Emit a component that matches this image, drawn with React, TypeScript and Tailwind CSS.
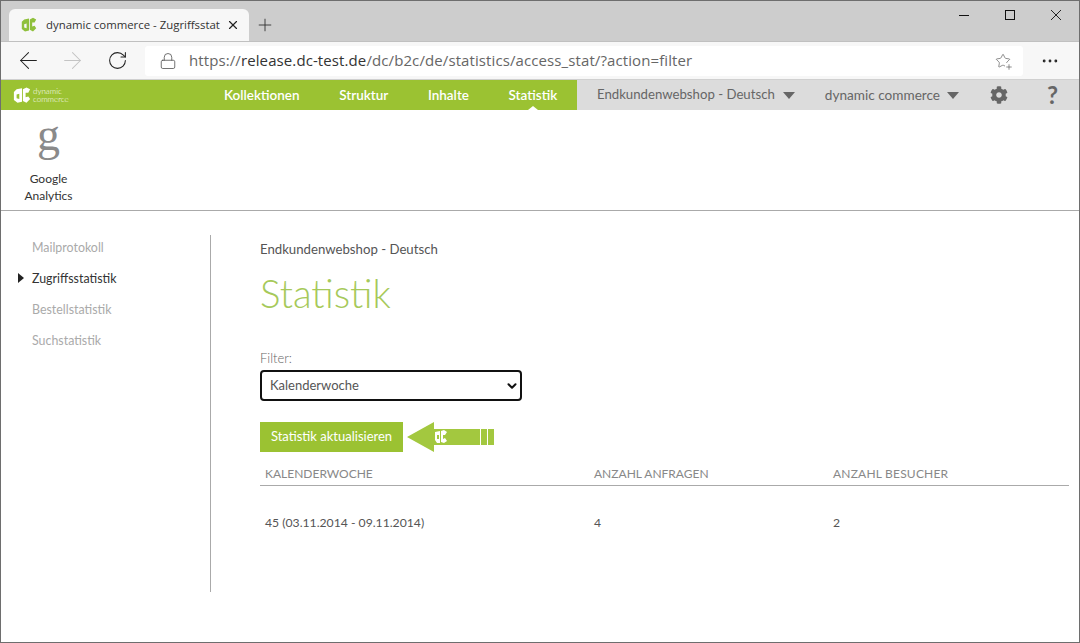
import { ArrowLeft, ArrowRight, ChevronDown, Lock, MoreHorizontal, Plus, RotateCw, Star, X } from 'lucide-react'
import { FaCog } from 'react-icons/fa'

const NAV_ITEMS = ['Kollektionen', 'Struktur', 'Inhalte', 'Statistik']
const SIDE_ITEMS = ['Mailprotokoll', 'Zugriffsstatistik', 'Bestellstatistik', 'Suchstatistik']

function DcMark({ className }: { className: string }) {
  return (
    <svg viewBox="0 0 20 18" className={className} fill="currentColor" fillRule="evenodd">
      <path d="M1 5 L4 2 L10 1 L10 16 L5 17 L1 14 Z M4 8 L4 12 L7 13 L7 7 Z" />
      <path d="M11 2 L15 0 L19 2 L17 6 L14 6 L14 11 L17 10 L19 13 L15 17 L11 15 Z" />
    </svg>
  )
}

function Caret() {
  return <span className="h-0 w-0 border-x-[6px] border-t-[7px] border-x-transparent border-t-[#666]" />
}

function BrowserChrome() {
  return (
    <>
      <div className="flex h-10 bg-[#cdcdcd] font-['Open_Sans',sans-serif]">
        <div className="mt-2 ml-2 flex h-8 w-60 items-center rounded-t-md bg-[#f7f7f7] pr-[9px] pl-3">
          <DcMark className="h-4 w-[16px] shrink-0 text-[#8fc03c]" />
          <span className="ml-[9px] text-[11.4px] whitespace-nowrap text-[#333]">dynamic commerce - Zugriffsstat</span>
          <X className="ml-auto h-3.5 w-3.5 shrink-0 text-[#222]" />
        </div>
        <Plus className="mt-[14px] ml-[6px] h-5 w-5 text-[#333]" strokeWidth={1.1} />
        <div className="ml-auto flex gap-[36px] pt-[9px] pr-[18px] text-[#111]">
          <svg viewBox="0 0 10 10" className="h-2.5 w-2.5" fill="none" stroke="currentColor">
            <path d="M0 5.5 H10" />
          </svg>
          <svg viewBox="0 0 10 10" className="h-2.5 w-2.5" fill="none" stroke="currentColor">
            <rect x="0.5" y="0.5" width="9" height="9" />
          </svg>
          <svg viewBox="0 0 10 10" className="h-2.5 w-2.5" fill="none" stroke="currentColor" strokeWidth={0.9}>
            <path d="M0 0 L10 10 M10 0 L0 10" />
          </svg>
        </div>
      </div>
      <div className="flex h-[39px] items-center border-t border-b border-t-[#c0c0c0] border-b-[#d0d0d0] bg-[#f7f7f7] font-['Open_Sans',sans-serif]">
        <ArrowLeft className="ml-[14px] h-[27px] w-[27px] text-[#222]" strokeWidth={0.9} />
        <ArrowRight className="ml-[17px] h-[27px] w-[27px] text-[#c4c4c4]" strokeWidth={0.9} />
        <RotateCw className="ml-[21px] h-[21px] w-[21px] text-[#222]" strokeWidth={1.2} />
        <div className="ml-[17px] flex h-[30px] w-[878px] items-center rounded-[3px] bg-white pl-[14px]">
          <Lock className="h-[18px] w-[18px] text-[#555]" strokeWidth={1.1} />
          <div className="ml-[12px] text-[15px] tracking-[0.1px] whitespace-nowrap text-[#666]">
            https://<span className="text-[#333]">release.dc-test.de</span>/dc/b2c/de/statistics/access_stat/?action=filter
          </div>
          <div className="relative mr-[12px] ml-auto">
            <Star className="h-4 w-4 text-[#666]" strokeWidth={1.1} />
            <Plus className="absolute -right-0.5 -bottom-0.5 h-2 w-2 bg-white text-[#555]" />
          </div>
        </div>
        <MoreHorizontal className="ml-[17px] h-5 w-5 text-[#222]" strokeWidth={1.4} />
      </div>
    </>
  )
}

function TopNav() {
  return (
    <div className="flex h-[30px] text-[13.2px]">
      <div className="flex w-[576px] items-center bg-[#9bc232]">
        <div className="ml-[12px] flex w-[60px] items-center text-white">
          <DcMark className="h-[17px] w-[18px] shrink-0" />
          <div className="ml-[2px] text-[8px] leading-[8px] font-light whitespace-nowrap">
            dynamic
            <br />
            commerce
          </div>
        </div>
        <div className="ml-[151px] flex h-full items-center gap-[39.6px] text-[13.5px] font-semibold text-white">
          {NAV_ITEMS.map((item) => (
            <div key={item} className="relative flex h-full items-center">
              {item}
              {item === 'Statistik' && (
                <span className="absolute bottom-0 left-1/2 h-0 w-0 -translate-x-1/2 border-x-[5px] border-b-[4px] border-x-transparent border-b-white" />
              )}
            </div>
          ))}
        </div>
      </div>
      <div className="flex flex-1 items-center bg-[#dcdcdc] text-[#666]">
        <span className="ml-[20px] whitespace-nowrap">Endkundenwebshop - Deutsch</span>
        <span className="ml-[8px] flex"><Caret /></span>
        <span className="ml-[30px] text-[13.6px] whitespace-nowrap">dynamic commerce</span>
        <span className="ml-[7px] flex"><Caret /></span>
        <FaCog className="ml-[31px] h-[18px] w-[18px] text-[#666]" />
        <span className="ml-[39px] text-[24px] leading-none font-bold">?</span>
      </div>
    </div>
  )
}

export default function App() {
  return (
    <div className="h-[643px] w-[1080px] overflow-hidden border border-[#6e6e6e] bg-white font-['Lato',sans-serif]">
      <BrowserChrome />
      <TopNav />
      <div className="flex h-[101px] border-b border-[#aaa]">
        <div className="flex w-[95px] flex-col items-center pt-[2px]">
          <div className="font-['Liberation_Serif',serif] text-[46px] leading-[46px] text-[#8a8a8a]">g</div>
          <div className="mt-[12px] text-center text-[12px] leading-[17px] text-[#333]">
            Google
            <br />
            Analytics
          </div>
        </div>
      </div>
      <div className="flex pt-[24px]">
        <div className="h-[357px] w-[210px] border-r border-[#aaa] text-[12.4px]">
          {SIDE_ITEMS.map((item) => {
            const active = item === 'Zugriffsstatistik'
            return (
              <div key={item} className={`relative h-[31px] pt-[5px] pl-[31px] leading-[16px] ${active ? 'text-[#333]' : 'text-[#aaa]'}`}>
                {active && (
                  <span className="absolute top-[7px] left-[17px] h-0 w-0 border-y-[5px] border-l-[6px] border-y-transparent border-l-[#222]" />
                )}
                {item}
              </div>
            )
          })}
        </div>
        <div className="ml-[49px] flex-1 pr-[10px]">
          <div className="pt-[4px] text-[13.2px] leading-[20px] text-[#555]">Endkundenwebshop - Deutsch</div>
          <h1 className="mt-[11px] text-[38.5px] leading-[46px] font-light text-[#a6c95a]">Statistik</h1>
          <div className="mt-[34px] text-[13px] leading-[16px] font-light text-[#666]">Filter:</div>
          <div className="mt-[4px] flex h-[31px] w-[262px] items-center rounded-[4px] border-2 border-[#111] pr-[1px] pl-[8px] text-[13px] text-[#555]">
            Kalenderwoche
            <ChevronDown className="ml-auto h-3.5 w-3.5 text-[#111]" strokeWidth={3.5} />
          </div>
          <div className="mt-[21px] flex items-center">
            <div className="flex h-[30px] w-[143px] items-center justify-center bg-[#9bc232] text-[13px] text-white">Statistik aktualisieren</div>
            <svg viewBox="0 0 88 30" className="ml-[4px] h-[30px] w-[88px]">
              <path d="M0 15 L27 0 L27 7 L73 7 L73 23 L27 23 L27 30 Z" fill="#a3c83f" />
              <rect x="74" y="7" width="6" height="16" fill="#a3c83f" />
              <rect x="81" y="7" width="6" height="16" fill="#a3c83f" />
              <path d="M28 10 L33 9 L33 21 L30 21 L28 18 Z M30 13 L30 17 L32 17 L32 13 Z" fill="#fff" fillRule="evenodd" />
              <path d="M34 9 L37 8 L40 10 L38 13 L36 13 L36 17 L38 16 L40 19 L37 21 L34 20 Z" fill="#fff" />
            </svg>
          </div>
          <table className="mt-[12px] w-full border-collapse text-[12px]">
            <thead>
              <tr className="h-[21px] border-b border-[#aaa] text-left text-[#888]">
                <th className="w-[334px] pl-[5px] font-normal">KALENDERWOCHE</th>
                <th className="w-[239px] font-normal">ANZAHL ANFRAGEN</th>
                <th className="font-normal tracking-[0.2px]">ANZAHL BESUCHER</th>
              </tr>
            </thead>
            <tbody>
              <tr className="h-[75px] text-[12.2px] text-[#555]">
                <td className="pl-[5px]">45 (03.11.2014 - 09.11.2014)</td>
                <td>4</td>
                <td>2</td>
              </tr>
            </tbody>
          </table>
        </div>
      </div>
    </div>
  )
}
